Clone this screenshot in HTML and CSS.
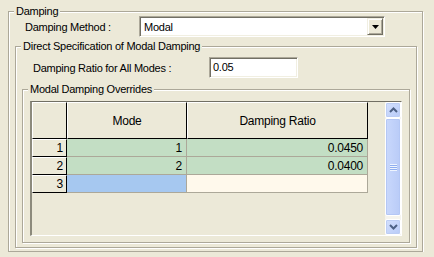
FILE: index.html
```html
<!DOCTYPE html>
<html lang="en">
<head>
    <meta charset="UTF-8">
    <title>Damping</title>
    <link rel="stylesheet" href="styles.css">
</head>
<body>
    <div class="panel">
        <div class="group group-damping">
            <div class="group-title">Damping</div>

            <div class="field-row method-row">
                <label class="field-label method-label">Damping Method :</label>
                <div class="combo">
                    <span class="combo-value">Modal</span>
                    <span class="combo-button">
                        <svg width="7" height="4" viewBox="0 0 7 4"><path d="M0 0h7L3.5 4z" fill="#000"/></svg>
                    </span>
                </div>
            </div>

            <div class="group group-direct">
                <div class="group-title">Direct Specification of Modal Damping</div>

                <div class="field-row ratio-row">
                    <label class="field-label ratio-label">Damping Ratio for All Modes :</label>
                    <div class="textbox">0.05</div>
                </div>

                <div class="group group-overrides">
                    <div class="group-title">Modal Damping Overrides</div>

                    <div class="grid">
                        <div class="grid-body">
                            <table class="grid-table">
                                <thead>
                                    <tr>
                                        <th class="corner"></th>
                                        <th class="col-mode">Mode</th>
                                        <th class="col-ratio">Damping Ratio</th>
                                    </tr>
                                </thead>
                                <tbody>
                                    <tr>
                                        <th class="row-head">1</th>
                                        <td class="cell filled">1</td>
                                        <td class="cell filled">0.0450</td>
                                    </tr>
                                    <tr>
                                        <th class="row-head">2</th>
                                        <td class="cell filled">2</td>
                                        <td class="cell filled">0.0400</td>
                                    </tr>
                                    <tr>
                                        <th class="row-head">3</th>
                                        <td class="cell selected"></td>
                                        <td class="cell empty"></td>
                                    </tr>
                                </tbody>
                            </table>
                        </div>

                        <div class="scrollbar">
                            <div class="scroll-btn">
                                <svg width="9" height="6" viewBox="0 0 9 6"><path d="M1 5l3.5-3.5L8 5" fill="none" stroke="#4D6185" stroke-width="2"/></svg>
                            </div>
                            <div class="scroll-track">
                                <div class="scroll-thumb">
                                    <span class="grip"></span>
                                </div>
                            </div>
                            <div class="scroll-btn">
                                <svg width="9" height="6" viewBox="0 0 9 6"><path d="M1 1l3.5 3.5L8 1" fill="none" stroke="#4D6185" stroke-width="2"/></svg>
                            </div>
                        </div>
                    </div>
                </div>
            </div>
        </div>
    </div>
</body>
</html>
```

FILE: styles.css
```css
* {
    box-sizing: border-box;
}

body {
    margin: 0;
    background: #ECE9D8;
    font-family: 'Liberation Sans', Arial, sans-serif;
    font-size: 11px;
    letter-spacing: -0.25px;
    color: #000;
    overflow: hidden;
}

.panel {
    padding: 11px 0 0 8px;
}

/* Group boxes (etched frame) */
.group {
    border: 1px solid #ACA899;
    box-shadow: inset 1px 1px 0 #fff, 1px 1px 0 #fff;
}

.group-title {
    width: max-content;
    height: 13px;
    line-height: 13px;
    margin: -7px 0 0 5px;
    padding: 0 2px;
    background: #ECE9D8;
}

.group-damping {
    width: 415px;
    height: 241px;
}

.group-direct {
    width: 402px;
    height: 202px;
    margin: 9px 0 0 6px;
}

.group-overrides {
    width: 388px;
    height: 154px;
    margin: 11px 0 0 6px;
}

/* Label + control rows */
.field-row {
    display: flex;
    align-items: center;
    height: 21px;
}

.method-row {
    margin-top: -2px;
    padding-left: 16px;
}

.method-label {
    width: 114px;
}

.ratio-row {
    margin-top: 4px;
    padding-left: 17px;
}

.ratio-label {
    width: 176px;
}

.combo,
.textbox {
    height: 21px;
    background: #fff;
    border: 1px solid;
    border-color: #ACA899 #fff #fff #ACA899;
    box-shadow: inset 1px 1px 0 #716F64, inset -1px -1px 0 #F1EFE2;
}

.combo {
    width: 246px;
    display: flex;
    align-items: center;
    padding: 1px;
}

.combo-value {
    flex: 1;
    padding-left: 3px;
}

.combo-button {
    width: 16px;
    height: 17px;
    display: flex;
    align-items: center;
    justify-content: center;
    background: #ECE9D8;
    border: 1px solid;
    border-color: #F1EFE2 #716F64 #716F64 #F1EFE2;
    box-shadow: inset 1px 1px 0 #fff, inset -1px -1px 0 #ACA899;
}

.textbox {
    width: 89px;
    padding: 0 3px;
    line-height: 19px;
}

/* Grid */
.grid {
    display: flex;
    width: 372px;
    height: 135px;
    margin: 5px 0 0 7px;
    border-style: solid;
    border-width: 1px 1px 1px 2px;
    border-color: #716F64 #fff #fff #8C8A7C;
}

.grid-body {
    flex: 1;
}

.grid-table {
    border-collapse: separate;
    border-spacing: 0;
    table-layout: fixed;
    width: 336px;
    font-size: 12px;
}

.grid-table th,
.grid-table td {
    padding: 0;
    font-weight: normal;
}

.grid-table thead th {
    height: 37px;
    text-align: center;
    background: #ECE9D8;
    border-style: solid;
    border-width: 1px;
    border-color: #fff #000 #000 #fff;
}

.corner {
    width: 35px;
}

.col-mode {
    width: 120px;
}

.col-ratio {
    width: 181px;
}

.grid-table tbody tr {
    height: 18px;
}

.row-head {
    text-align: right;
    padding-right: 3px !important;
    background: #ECE9D8;
    border-style: solid;
    border-width: 1px;
    border-color: #fff #000 #000 #fff;
}

.cell {
    text-align: right;
    padding-right: 4px !important;
    border-right: 1px solid #ACA899;
    border-bottom: 1px solid #ACA899;
}

.filled {
    background: #C3DEC4;
}

.selected {
    background: #A6C8F0;
}

.empty {
    background: #FFF9EC;
}

/* Scrollbar */
.scrollbar {
    width: 16px;
    display: flex;
    flex-direction: column;
    background: #F5F4EE;
}

.scroll-btn {
    height: 16px;
    display: flex;
    align-items: center;
    justify-content: center;
    border: 1px solid #fff;
    border-radius: 2px;
    background: linear-gradient(135deg, #D4E0FD, #B8CBF8);
    box-shadow: inset 0 0 0 1px #BCCDF4;
}

.scroll-track {
    flex: 1;
    padding: 0 0 2px;
}

.scroll-thumb {
    height: 98px;
    display: flex;
    align-items: center;
    justify-content: center;
    border: 1px solid #fff;
    border-radius: 2px;
    background: linear-gradient(90deg, #C9D8FC, #B9CBF7);
    box-shadow: inset 0 0 0 1px #B4C7F5;
}

.grip {
    width: 7px;
    height: 7px;
    background: repeating-linear-gradient(180deg, #EEF4FE 0 1px, #8FAEF0 1px 2px);
}
```
